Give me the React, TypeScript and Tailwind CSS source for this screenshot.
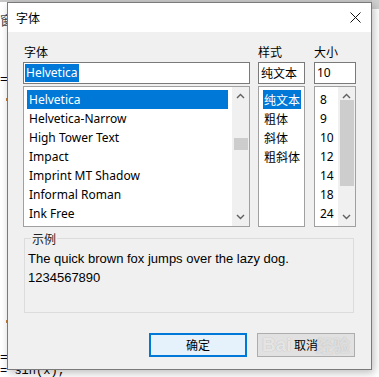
import React from 'react'

const ui = "font-['Segoe_UI','Noto_Sans','Noto_Sans_CJK_SC',sans-serif]"
const cjk = "font-['Noto_Sans_CJK_SC',sans-serif]"

const fonts = ['Helvetica', 'Helvetica-Narrow', 'High Tower Text', 'Impact', 'Imprint MT Shadow', 'Informal Roman', 'Ink Free']
const styles = ['纯文本', '粗体', '斜体', '粗斜体']
const sizes = ['8', '9', '10', '12', '14', '18', '24']

function ChevronUp() {
  return (
    <svg width="9" height="6" viewBox="0 0 9 6" className="text-[#606060]">
      <path d="M1 5 L4.5 1.5 L8 5" fill="none" stroke="currentColor" strokeWidth="1.4" />
    </svg>
  )
}

function ChevronDown() {
  return (
    <svg width="9" height="6" viewBox="0 0 9 6" className="text-[#606060]">
      <path d="M1 1 L4.5 4.5 L8 1" fill="none" stroke="currentColor" strokeWidth="1.4" />
    </svg>
  )
}

function ScrollBar({ thumbTop, thumbHeight }: { thumbTop: number; thumbHeight: number }) {
  return (
    <div className="relative flex w-[17px] shrink-0 flex-col items-center justify-between bg-[#f0f0f0] py-[6px]">
      <ChevronUp />
      <div className="absolute left-[2px] right-[1px] bg-[#cdcdcd]" style={{ top: thumbTop, height: thumbHeight }} />
      <ChevronDown />
    </div>
  )
}

function Background() {
  return (
    <div className="absolute inset-0 bg-white">
      <div className="h-[2px] bg-[#c6c6c6]" />
      <div className={`absolute left-0 top-[10px] text-[13px] text-[#444] ${cjk}`}>窗</div>
      <div className="absolute left-0 top-[70px] font-['Liberation_Mono',monospace] text-[13px] text-black">=</div>
      <div className="absolute left-[6px] top-[98px] h-[3px] w-[2px] bg-[#c08040]" />
      <div className="absolute left-[6px] top-[320px] h-[3px] w-[2px] bg-[#c08040]" />
      <div className="absolute left-0 top-[348px] font-['Liberation_Mono',monospace] text-[13px] text-black">=</div>
      <div className="absolute left-0 top-[365px] font-['Liberation_Mono',monospace] text-[12px] leading-[12px] text-black">= sin(x);</div>
      <div className="absolute right-0 top-0 h-[9px] w-[7px] bg-[#d0d0d0]" />
    </div>
  )
}

export default function App() {
  return (
    <div className={`relative h-[377px] w-[379px] overflow-hidden ${ui}`}>
      <Background />

      <div className="absolute left-[7px] top-[2px] flex h-[368px] w-[365px] flex-col border border-[#7a7a7a] bg-[#f0f0f0] shadow-[2px_3px_8px_rgba(0,0,0,0.25)]">
        {/* title bar */}
        <div className="flex h-[29px] items-center justify-between bg-white pl-[8px] pr-[10px]">
          <span className={`text-[12px] text-black ${cjk}`}>字体</span>
          <svg width="11" height="11" viewBox="0 0 11 11">
            <path d="M0.5 0.5 L10.5 10.5 M10.5 0.5 L0.5 10.5" stroke="#111" strokeWidth="1" />
          </svg>
        </div>

        {/* body */}
        <div className="flex flex-1 flex-col px-[15px] pt-[12px]">
          <div className="flex gap-[8px]">
            {/* font column */}
            <div className="flex w-[227px] flex-col">
              <div className={`h-[16px] pl-[1px] text-[12px] leading-[16px] ${cjk}`}>字体</div>
              <div className="mt-[2px] flex h-[22px] items-center border border-[#7a7a7a] bg-white pl-[1px]">
                <span className="bg-[#0078d7] px-[1px] text-[12px] leading-[18px] text-white">Helvetica</span>
              </div>
              <div className="mt-[2px] flex h-[141px] border border-[#a0a0a0] bg-white">
                <div className="flex flex-1 flex-col pl-[3px] pr-[4px] pt-[3px]">
                  {fonts.map((f, i) => (
                    <div
                      key={f}
                      className={`h-[19px] pl-[2px] text-[12px] leading-[19px] ${i === 0 ? 'bg-[#0078d7] text-white' : 'text-black'}`}
                    >
                      {f}
                    </div>
                  ))}
                </div>
                <ScrollBar thumbTop={51} thumbHeight={12} />
              </div>
            </div>

            {/* style column */}
            <div className="flex w-[47px] flex-col">
              <div className={`h-[16px] text-[12px] leading-[16px] ${cjk}`}>样式</div>
              <div className={`mt-[2px] flex h-[22px] items-center border border-[#7a7a7a] bg-white pl-[2px] text-[12px] ${cjk}`}>
                纯文本
              </div>
              <div className={`mt-[2px] flex h-[141px] flex-col border border-[#a0a0a0] bg-white pl-[4px] pr-[3px] pt-[3px] ${cjk}`}>
                {styles.map((s, i) => (
                  <div
                    key={s}
                    className={`h-[19px] pl-[1px] text-[12px] leading-[19px] ${i === 0 ? 'bg-[#0078d7] text-white' : 'text-black'}`}
                  >
                    {s}
                  </div>
                ))}
              </div>
            </div>

            {/* size column */}
            <div className="ml-[1px] flex w-[42px] flex-col">
              <div className={`h-[16px] text-[12px] leading-[16px] ${cjk}`}>大小</div>
              <div className="mt-[2px] flex h-[22px] items-center border border-[#7a7a7a] bg-white pl-[2px] text-[12px]">
                10
              </div>
              <div className="mt-[2px] flex h-[141px] border border-[#a0a0a0] bg-white">
                <div className="flex flex-1 flex-col pl-[5px] pt-[3px]">
                  {sizes.map((s) => (
                    <div key={s} className="h-[19px] text-[12px] leading-[19px] text-black">
                      {s}
                    </div>
                  ))}
                </div>
                <ScrollBar thumbTop={13} thumbHeight={86} />
              </div>
            </div>
          </div>

          {/* sample */}
          <div className="relative ml-[1px] mt-[11px] h-[75px] w-[330px] border border-[#dcdcdc] px-[3px] pt-[10px]">
            <span className={`absolute left-[6px] top-[-8px] bg-[#f0f0f0] px-[1px] text-[12px] leading-[16px] text-[#222] ${cjk}`}>
              示例
            </span>
            <div className="font-['Liberation_Sans',Arial,sans-serif] text-[13px] leading-[19px] text-black">
              The quick brown fox jumps over the lazy dog.
              <br />
              1234567890
            </div>
          </div>

          {/* buttons */}
          <div className="mt-[20px] flex justify-end gap-[10px] pr-[1px]">
            <button className={`flex h-[24px] w-[98px] items-center justify-center border-2 border-[#0078d7] bg-[#e5f1fb] text-[12px] text-black ${cjk}`}>
              确定
            </button>
            <button className={`relative flex h-[24px] w-[98px] items-center justify-center border border-[#adadad] bg-[#e1e1e1] text-[12px] text-black ${cjk}`}>
              取消
              <span className="absolute left-[4px] top-[0px] font-['Liberation_Sans',sans-serif] text-[19px] font-bold leading-[22px] text-white/70 [text-shadow:0_0_1px_rgba(0,0,0,0.25)]">
                Bai
              </span>
              <span className="absolute right-[4px] top-[1px] text-[17px] font-bold leading-[20px] text-white/60 [text-shadow:0_0_1px_rgba(0,0,0,0.25)]">
                经验
              </span>
            </button>
          </div>
        </div>
      </div>
    </div>
  )
}
